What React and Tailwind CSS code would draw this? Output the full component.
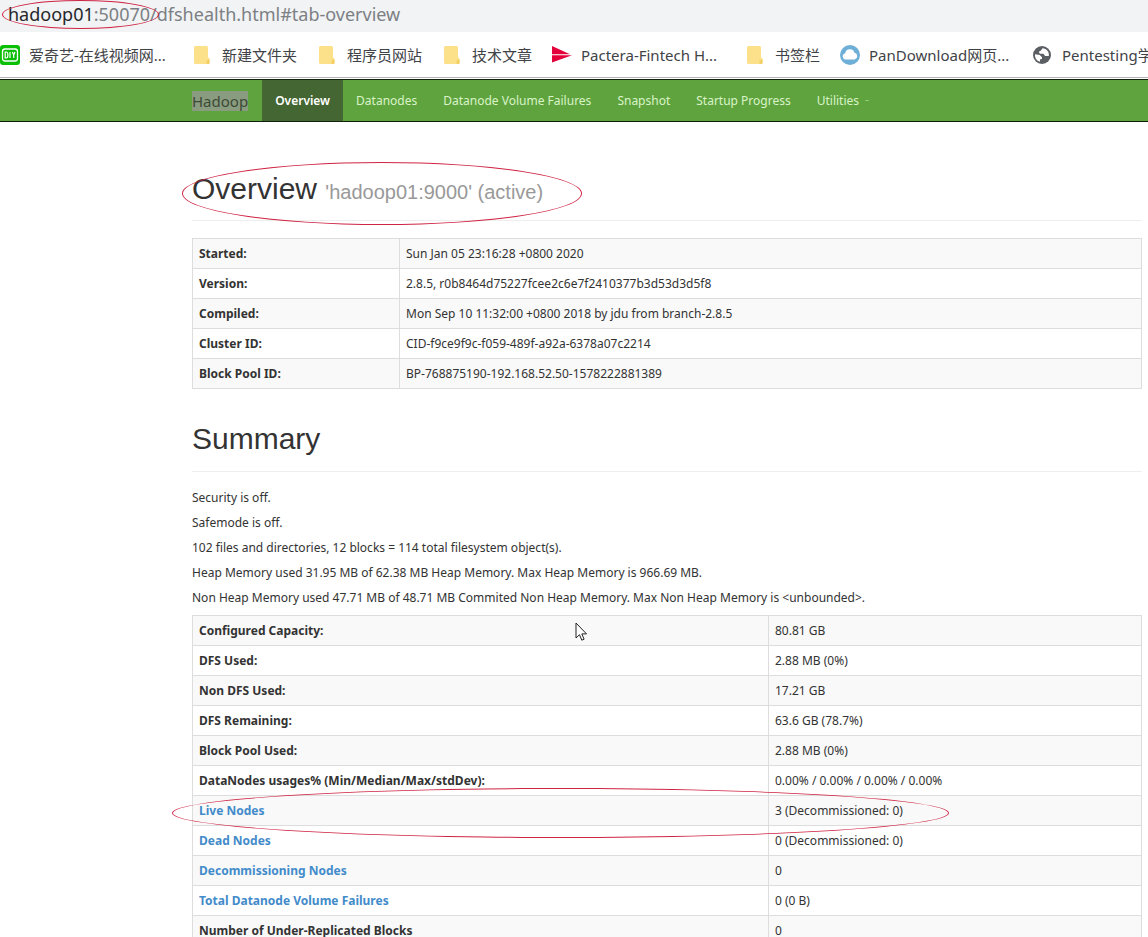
import { clsx } from "clsx";

const bookmarks = [
  { label: "爱奇艺-在线视频网...", icon: "iqiyi", width: "w-[193px]" },
  { label: "新建文件夹", icon: "folder", width: "w-[125px]" },
  { label: "程序员网站", icon: "folder", width: "w-[125px]" },
  { label: "技术文章", icon: "folder", width: "w-[109px]" },
  { label: "Pactera-Fintech H...", icon: "pactera", width: "w-[194px]" },
  { label: "书签栏", icon: "folder", width: "w-[94px]" },
  { label: "PanDownload网页...", icon: "cloud", width: "w-[193px]" },
  { label: "Pentesting学", icon: "globe", width: "w-[125px]" },
];

const navLinks = [
  { label: "Overview", active: true },
  { label: "Datanodes" },
  { label: "Datanode Volume Failures" },
  { label: "Snapshot" },
  { label: "Startup Progress" },
];

const overviewRows = [
  { label: "Started:", value: "Sun Jan 05 23:16:28 +0800 2020" },
  { label: "Version:", value: "2.8.5, r0b8464d75227fcee2c6e7f2410377b3d53d3d5f8" },
  { label: "Compiled:", value: "Mon Sep 10 11:32:00 +0800 2018 by jdu from branch-2.8.5" },
  { label: "Cluster ID:", value: "CID-f9ce9f9c-f059-489f-a92a-6378a07c2214" },
  { label: "Block Pool ID:", value: "BP-768875190-192.168.52.50-1578222881389" },
];

const summaryText = [
  "Security is off.",
  "Safemode is off.",
  "102 files and directories, 12 blocks = 114 total filesystem object(s).",
  "Heap Memory used 31.95 MB of 62.38 MB Heap Memory. Max Heap Memory is 966.69 MB.",
  "Non Heap Memory used 47.71 MB of 48.71 MB Commited Non Heap Memory. Max Non Heap Memory is <unbounded>.",
];

const summaryRows = [
  { label: "Configured Capacity:", value: "80.81 GB" },
  { label: "DFS Used:", value: "2.88 MB (0%)" },
  { label: "Non DFS Used:", value: "17.21 GB" },
  { label: "DFS Remaining:", value: "63.6 GB (78.7%)" },
  { label: "Block Pool Used:", value: "2.88 MB (0%)" },
  { label: "DataNodes usages% (Min/Median/Max/stdDev):", value: "0.00% / 0.00% / 0.00% / 0.00%" },
  { label: "Live Nodes", value: "3 (Decommissioned: 0)", link: true, circled: true },
  { label: "Dead Nodes", value: "0 (Decommissioned: 0)", link: true },
  { label: "Decommissioning Nodes", value: "0", link: true },
  { label: "Total Datanode Volume Failures", value: "0 (0 B)", link: true },
  { label: "Number of Under-Replicated Blocks", value: "0" },
];

const BookmarkIcon = ({ type }) => {
  if (type === "iqiyi") {
    return (
      <svg viewBox="0 0 20 20" className="h-5 w-5 shrink-0">
        <rect width="20" height="20" rx="3" fill="#0bbe06" />
        <rect x="2.5" y="4" width="15" height="12" rx="2.5" fill="none" stroke="#fff" strokeWidth="1.3" />
        <path d="M5.2 7v6h1.2c2 0 2-6 0-6zM10 7v6M12.4 7l1.3 3 1.4-3M13.7 10v3" fill="none" stroke="#fff" strokeWidth="1.2" />
      </svg>
    );
  }
  if (type === "pactera") {
    return (
      <svg viewBox="0 0 20 20" className="h-5 w-5 shrink-0">
        <path d="M0 1 18 9.2H0z" fill="#e4003a" />
        <path d="M0 10.2h20L0 17.5z" fill="#e4003a" />
      </svg>
    );
  }
  if (type === "cloud") {
    return (
      <svg viewBox="0 0 20 20" className="h-5 w-5 shrink-0">
        <circle cx="10" cy="10" r="10" fill="#6eafd8" />
        <path d="M5.6 14.5a3.2 3.2 0 0 1-.4-6.3 4.8 4.8 0 0 1 9.3-.5 3.5 3.5 0 0 1 .2 6.8z" fill="#fff" />
      </svg>
    );
  }
  if (type === "globe") {
    return (
      <svg viewBox="0 0 20 20" className="h-5 w-5 shrink-0">
        <circle cx="9" cy="10" r="9" fill="#5b5e63" />
        <path d="M2 9.3 6.8 10l2.2 2.2v1.6l-2 .8v2.2C3.6 16 1.7 12.8 2 9.3zM9.5 3.2 8 5.5 5.8 6.8l1 1.9h3.6l1.7 2.3h3.7c.8-4-2.3-7.7-6.3-7.800z" fill="#fff" />
      </svg>
    );
  }
  return (
    <svg viewBox="0 0 20 20" className="h-5 w-5 shrink-0">
      <path d="M1 2.5Q1 1 2.5 1h11Q15 1 15 2.5V12l1.5 2v4q0 1-1 1h-13Q1 19 1 17.5z" fill="#fde08a" />
      <path d="M13.5 19v-3.5l3-1.5v4q0 1-1 1z" fill="#f3d065" />
    </svg>
  );
};

// hand-drawn marker around a piece of content
const Marker = ({ className }) => (
  <span
    aria-hidden="true"
    className={clsx("pointer-events-none absolute z-10 rounded-[50%] border border-[#cf2544]", className)}
  />
);

const AddressBar = () => (
  <div className="h-8 bg-[#f1f3f4] text-[18px] leading-7">
    <div className="relative ml-2 w-fit whitespace-nowrap text-[#7c8084]">
      <span className="text-[#26282b]">hadoop01</span>:50070/dfshealth.html#tab-overview
      <Marker className="-left-1.5 top-0 h-[29px] w-[157px]" />
    </div>
  </div>
);

const BookmarksBar = () => (
  <div className="flex h-[46px] items-center overflow-hidden border-b border-[#b5b5b5] bg-white text-[15px] text-[#3f4347]">
    {bookmarks.map((b) => (
      <a key={b.label} href="#" className={clsx("flex shrink-0 items-center gap-[9px] whitespace-nowrap", b.width)}>
        <BookmarkIcon type={b.icon} />
        {b.label}
      </a>
    ))}
  </div>
);

const Navbar = () => (
  <nav className="mt-px flex h-[43px] items-stretch border-y border-[#10200a] bg-[#5fa33e] pl-48 text-[12px] text-[#d9f3c8]">
    <a href="#" className="flex items-center pr-3.5 text-[15px] text-[#3c4a36]">
      <span className="bg-[#8a9c80] leading-5">Hadoop</span>
    </a>
    {navLinks.map((l) => (
      <a
        key={l.label}
        href="#"
        className={clsx("flex items-center px-[13px]", l.active && "bg-[#446633] font-semibold text-white")}
      >
        {l.label}
      </a>
    ))}
    <button type="button" className="flex items-center gap-1.5 px-[13px]">
      Utilities
      <span className="h-px w-1 bg-[#8fc774]" />
    </button>
  </nav>
);

const InfoTable = ({ rows, labelWidth }) => (
  <table className="w-full table-fixed border-collapse border border-[#ddd]">
    <tbody>
      {rows.map((row) => (
        <tr key={row.label} className="h-[30px] odd:bg-[#f9f9f9]">
          <th scope="row" className={clsx("border border-[#ddd] px-1.5 text-left font-bold", labelWidth)}>
            {row.circled ? (
              <span className="relative block">
                <a href="#" className="text-[#428bca]">{row.label}</a>
                <Marker className="-left-[27px] -top-3.5 h-[50px] w-[777px]" />
              </span>
            ) : row.link ? (
              <a href="#" className="text-[#428bca]">{row.label}</a>
            ) : (
              row.label
            )}
          </th>
          <td className="border border-[#ddd] px-1.5">{row.value}</td>
        </tr>
      ))}
    </tbody>
  </table>
);

const Cursor = () => (
  <svg viewBox="0 0 13 20" className="pointer-events-none absolute left-[383px] top-[7px] z-10 h-5 w-[13px]">
    <path d="M1 1v15l3.5-3.3 2.3 5.5 2.3-1-2.3-5.3h4.7z" fill="#fff" stroke="#222" />
  </svg>
);

export default function App() {
  return (
    <div className="h-screen overflow-hidden bg-white font-['Noto_Sans','Noto_Sans_CJK_SC',sans-serif] text-[12px] leading-[18px] text-[#333]">
      <AddressBar />
      <BookmarksBar />
      <Navbar />
      <main className="ml-48 mr-1.5">
        <header className="mt-[47px] border-b border-[#eee] pb-2 font-['Liberation_Sans',sans-serif]">
          <h1 className="relative w-fit text-[30px] leading-10">
            Overview <small className="text-[20px] text-[#999]">'hadoop01:9000' (active)</small>
            <Marker className="-left-2.5 -top-[7px] h-[63px] w-[400px]" />
          </h1>
        </header>
        <section className="mt-[17px]">
          <InfoTable rows={overviewRows} labelWidth="w-[207px]" />
        </section>
        <header className="mt-[30px] border-b border-[#eee] pb-3 font-['Liberation_Sans',sans-serif]">
          <h1 className="text-[30px] leading-10">Summary</h1>
        </header>
        <section className="mt-[17px]">
          <div className="space-y-[7px]">
            {summaryText.map((line) => (
              <p key={line}>{line}</p>
            ))}
          </div>
          <div className="relative mt-2">
            <InfoTable rows={summaryRows} labelWidth="w-[576px]" />
            <Cursor />
          </div>
        </section>
      </main>
    </div>
  );
}
